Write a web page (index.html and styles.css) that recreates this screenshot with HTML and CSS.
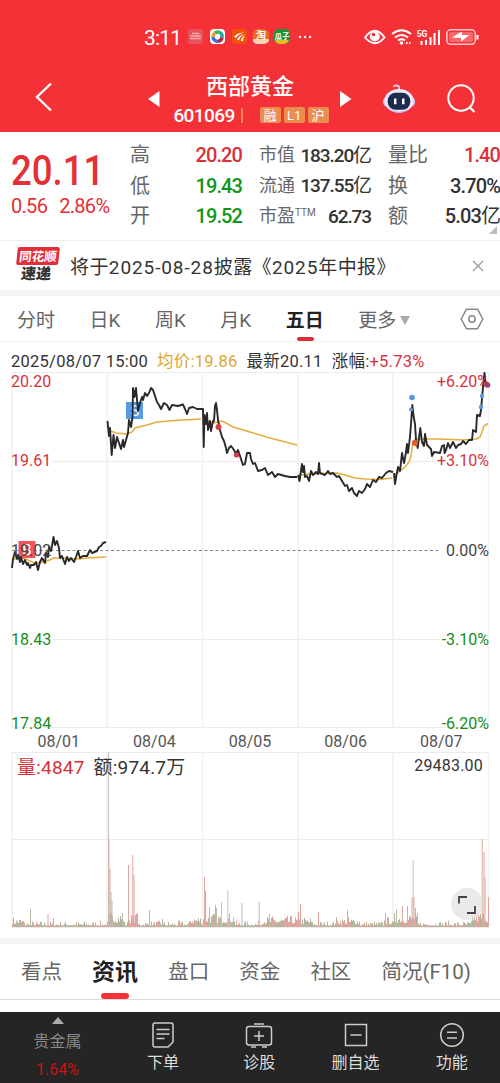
FILE: index.html
```
<!DOCTYPE html>
<html lang="zh-CN">
<head>
  <meta charset="UTF-8">
  <meta name="viewport" content="width=device-width, initial-scale=1.0">
  <title>西部黄金 601069</title>
  <link rel="stylesheet" href="styles.css">
</head>
<body>
  <header class="header">
    <div class="status">
      <span class="clock">3:11</span>
      <svg class="apps" width="126" height="18" viewBox="0 0 126 18">
        <rect x="0" y="1" width="15" height="15" rx="3" fill="#e9525a"/>
        <path d="M2 8h11M4 5.500h7M2 10.500h11" stroke="#fba8aa" stroke-width="1.500"/>
        <rect x="22" y="1" width="15" height="15" rx="4" fill="#fff"/>
        <g fill="none" stroke-width="3.500">
          <path d="M25 9a5 5 0 0 1 2-4" stroke="#f0a02c"/>
          <path d="M27 5a5 5 0 0 1 5-.6" stroke="#38b757"/>
          <path d="M32 4.400a5 5 0 0 1 2 5" stroke="#22a4a9"/>
          <path d="M34 9.400a5 5 0 0 1-4 4" stroke="#b52845"/>
          <path d="M30 13.400a5 5 0 0 1-5-4.400" stroke="#3475df"/>
        </g>
        <rect x="44" y="1" width="15" height="15" rx="3" fill="#f45108"/>
        <path d="M46 8.500q4-4 10-4q-6 1.500-8 5.500zM49 11.500q2-4 8-6q-5 3-6 7zM53 13q0-4 4-5.500q-2 2-2 5.500z" fill="#fff"/>
        <rect x="65" y="1" width="16" height="15" rx="5" fill="#ef6a1d"/>
        <path d="M65 11h16v2q-2 3-5 3h-6q-4 0-5-3z" fill="#f8d5b8"/>
        <text x="73" y="11" font-size="10" font-weight="700" text-anchor="middle" fill="#fff">淘</text>
        <rect x="86" y="1" width="16" height="15" rx="5" fill="#19963b"/>
        <path d="M87 12h14q-2 4-5 4h-4q-4 0-5-4z" fill="#e8bd22"/>
        <text x="94" y="10.500" font-size="7.500" font-weight="700" text-anchor="middle" fill="#fff">瓜子</text>
        <g fill="#fff"><circle cx="112" cy="9" r="1.200"/><circle cx="117" cy="9" r="1.200"/><circle cx="122" cy="9" r="1.200"/></g>
      </svg>
      <svg class="system" width="116" height="18" viewBox="0 0 116 18">
        <path d="M1 9.500Q11-4 20.500 9.500Q11 21 1 9.500z" fill="none" stroke="#fff" stroke-width="1.800"/>
        <circle cx="10.800" cy="8.500" r="5" fill="#fff"/>
        <circle cx="9.500" cy="6.500" r="1.800" fill="#f53238"/>
        <g fill="none" stroke="#fff" stroke-width="2">
          <path d="M28 6q9.500-7.500 19 0M31 9.500q6.500-5 13 0M34 12.500q3.500-2.500 7 0"/>
        </g>
        <circle cx="37.500" cy="15" r="1.800" fill="#fff"/>
        <path d="M42 15h1.500M45 15h1.500" stroke="#fff" stroke-width="2"/>
        <text class="net" x="58" y="8.500" fill="#fff">5G</text>
        <path d="M57.500 13v4M62 12v5M66.500 9v8M70.500 5v12M75 2v15" stroke="#fff" stroke-width="2"/>
        <rect x="82.800" y="1.800" width="28.500" height="14.500" rx="4" fill="none" stroke="#ffc9ca" stroke-width="1.600"/>
        <rect x="85" y="4" width="24" height="10" rx="2" fill="#f8696d"/>
        <path d="M88 9.500l10-6v3.500h7.500l-8.500 6.500v-3.500z" fill="#fff"/>
        <path d="M113.500 7v4.500" stroke="#fff" stroke-width="2"/>
      </svg>
    </div>
    <div class="nav">
      <svg class="back" width="20" height="30" viewBox="0 0 20 30"><path d="M17 1.500L3 15l14 13.500" fill="none" stroke="#fff" stroke-width="2.400"/></svg>
      <svg class="prev" width="12" height="16" viewBox="0 0 12 16"><path d="M11.500 0v16L0 8z" fill="#fff"/></svg>
      <div class="stock">
        <h1>西部黄金</h1>
        <div class="code"><span>601069</span><i></i><b>融</b><b>L1</b><b>沪</b></div>
      </div>
      <svg class="next" width="12" height="16" viewBox="0 0 12 16"><path d="M0 0v16l11.500-8z" fill="#fff"/></svg>
      <svg class="robot" width="34" height="31" viewBox="0 0 36 32">
        <path d="M12 3.500q3-3 6 0v3" fill="none" stroke="#e8def5" stroke-width="1.800"/>
        <rect x="1" y="14" width="34" height="11" rx="5" fill="#c9c4ef"/>
        <ellipse cx="18" cy="18.500" rx="15.500" ry="12.500" fill="#efe7fa"/>
        <path d="M7 26q11 8 22 0q-4 5-11 5t-11-5z" fill="#bfaef0"/>
        <rect x="6" y="10" width="24" height="18" rx="8.500" fill="#1d2b4d"/>
        <path d="M14 16v6M22.500 16v6" stroke="#fff" stroke-width="2.600"/>
      </svg>
      <svg class="search" width="30" height="30" viewBox="0 0 30 30"><circle cx="14" cy="14" r="12.700" fill="none" stroke="#fff" stroke-width="2"/><path d="M22.500 23l5 5" stroke="#fff" stroke-width="2.200"/></svg>
    </div>
  </header>

  <section class="quote">
    <div class="price">
      <strong>20.11</strong>
      <p><span>0.56</span><span>2.86%</span></p>
    </div>
    <dl>
      <dt>高</dt><dd class="up">20.20</dd>
      <dt>低</dt><dd class="down">19.43</dd>
      <dt>开</dt><dd class="down">19.52</dd>
    </dl>
    <dl class="small">
      <dt>市值</dt><dd>183.20<em>亿</em></dd>
      <dt>流通</dt><dd>137.55<em>亿</em></dd>
      <dt>市盈<sup>TTM</sup></dt><dd>62.73</dd>
    </dl>
    <dl class="last">
      <dt>量比</dt><dd class="up">1.40</dd>
      <dt>换</dt><dd>3.70%</dd>
      <dt>额</dt><dd>5.03<em>亿</em></dd>
    </dl>
  </section>

  <section class="news">
    <div class="logo"><b>同花顺</b><span>速递</span></div>
    <p>将于<span>2025-08-28</span>披露《<span>2025</span>年中报》</p>
    <svg width="12" height="12" viewBox="0 0 12 12"><path d="M1 1l10 10M11 1L1 11" stroke="#999" stroke-width="1.300"/></svg>
  </section>

  <nav class="periods">
    <span>分时</span>
    <span>日K</span>
    <span>周K</span>
    <span>月K</span>
    <span class="active">五日</span>
    <span class="more">更多<i></i></span>
    <svg width="24" height="22" viewBox="0 0 24 22"><path d="M6.500 1.200h11L22.800 11l-5.300 9.800h-11L1.200 11z" fill="none" stroke="#888" stroke-width="1.500" stroke-linejoin="round"/><circle cx="12" cy="11" r="3.200" fill="none" stroke="#888" stroke-width="1.500"/></svg>
  </nav>

  <div class="info">
    <span>2025/08/07 15:00</span>
    <span class="avg">均价:19.86</span>
    <span>最新20.11</span>
    <span>涨幅:<b>+5.73%</b></span>
  </div>

  <svg class="chart" width="500" height="356" viewBox="0 372 500 356">
    <path class="grid" d="M12 372.500H489M52 461.500H440M52 639.500H440M12 727.500H489"/>
    <path class="grid bold" d="M12 372V728M107 372V728M202.500 372V728M298 372V728M393 372V728M488.500 372V728"/>
    <path d="M12 550.500H440" stroke="#888" stroke-dasharray="3 2.500"/>

    <g class="average">
      <path d="M12 560L20 557L28 560L34 563L45 562L54 558L65 558L78 559L88 558L106 557"/>
      <path d="M108 430L116 433L127 434L132 432L135 428L147 425L157 422L175 420.500L201 419"/>
      <path d="M203 416L208 421L214 423L222 421L226 423L233 427L250 432L270 438L297 445"/>
      <path d="M299 475L312 474L337 473L345 475L355 478L365 479L380 479.500L392 478"/>
      <path d="M395 475L401 470L405 467L409 462L411 456L413 441L417 439L440 439L463 440L476 439L480 437L482 432L484 426L488 423.500"/>
    </g>
    <rect x="18.500" y="541" width="17" height="17" fill="#f0555f"/>
    <text x="27" y="555" class="mark">B</text>
    <rect x="126" y="402" width="17" height="17" fill="#579be4"/>
    <text x="135" y="416" class="mark">S</text>
    <g class="line">
      <path d="M12 568L13 559L15 552L17 559L18 555L20 562L21 557L23 564L25 560L27 565L28 563L30 568L31 565L34 565L36 562L38 570L40 562L42 558L45 563L46 553L48 557L49 547L51 551L52 546L53.500 537L55 545L57 541L59 548L60 558L62 556L65 564L67 557L69 561L71 558L74 562L76 557L78 551L80 558L83 556L87 556L90 550L92 553L97 551L99 547L101 546L103 543L106 542"/>
      <path d="M107.500 421L109 436L110 428L111.700 455L113.500 435L115 448L117 437L119 443L121 449L123 440L124 447L126 440L128 433L129 420L131 427L132.500 417L133 388L134.500 397L136 388L138 411L140 403L142 397L143 400L145 393L147 396L149 393L151 388L153 390L155 396L157 402L159 405L161 409L164 403L167 405L169.500 410L172 405L178 406L183 404.500L185 409L187 414L189 408L193 407L197 409L203 409L203.700 447L204.500 415L206 424L207 413L208 430L210 421L211 431L213 421L214 421L215 406L216 403L217 410L218 420L220 430L222 437L224 441L226 448L227 453L229 448L231 446L234 450L236 454L238 450L240 456L243 465L245 464L247 453L250 453L251 459L253 464L255 463L258 471L262 470L265 468L268 475L272 472L275 477L278 474L285 476L290 477L297 477"/>
      <path d="M298 475L299.500 481L302 464L303 472L304 466L305 477L307 476L309 481L311 471L313 475L316 472L318 474L319 463L320 473L325 475L328 471L330 474L333 473L337 477L339 476L342 481L345 486L347 485L349 491L352 488L354 493L357 496L359 491L362 493L365 489L367 484L370 487L373 480L376 482L379 477L382 478L386 473L389 471L393 472"/>
      <path d="M394 473L395 484L396.500 475L398 467L400 471L402 453L404 463L405 458L406 452L407 444L408 453L410 437L411.300 420L412.300 405L413.700 417L415 424L416 440L417.700 448L419 438L420.300 428L422 442L424 446L425 434L427 445L429 447L431 449L432 456L434 452L440 453L442 446L444 445L444.500 453L446 450L448 443L450 448L453 442L456 448L458 445L461 444L463 441L466 444L469 440L472 440L473 430L476 432L477 415L480 416L481 410L483 387L484.500 373L485.500 382L487 385"/>
    </g>
    <g fill="#d83f45"><circle cx="218.500" cy="427" r="3"/><circle cx="236.500" cy="455" r="2.600"/></g>
    <circle cx="415" cy="443" r="3" fill="#e65a2d"/>
    <g fill="#5b98dc"><circle cx="412" cy="397.500" r="2.800"/><circle cx="411" cy="409.500" r="2"/><circle cx="482" cy="396" r="2.200"/><circle cx="481" cy="407" r="2.200"/></g>
    <circle cx="487.500" cy="385" r="2.800" fill="#804580"/>

    <g class="axis">
      <text class="up" x="11" y="386.500">20.20</text>
      <text class="up" x="11" y="466">19.61</text>
      <text x="11" y="555.500">19.02</text>
      <text class="down" x="11" y="645">18.43</text>
      <text class="down" x="11" y="729">17.84</text>
    </g>
    <g class="axis right">
      <text class="up" x="489" y="386.500">+6.20%</text>
      <text class="up" x="489" y="466">+3.10%</text>
      <text x="489" y="555.500">0.00%</text>
      <text class="down" x="489" y="645">-3.10%</text>
      <text class="down" x="489" y="729">-6.20%</text>
    </g>
  </svg>

  <div class="dates"><span>08/01</span><span>08/04</span><span>08/05</span><span>08/06</span><span>08/07</span></div>

  <div class="volume">
    <svg width="500" height="176" viewBox="0 752 500 176">
      <path class="grid" d="M12 752.500H489M12 839.500H489M12 927.500H489"/>
      <path class="grid bold" d="M12 752V927M107 752V927M202.500 752V927M298 752V927M393 752V927M488.500 752V927"/>
      <g id="bars"></g>
    </svg>
    <div class="legend"><span class="up">量:4847</span><span>额:974.7万</span><span class="max">29483.00</span></div>
    <div class="expand"><svg width="18" height="18" viewBox="0 0 18 18"><path d="M1 7.500V1h8M17 10v7H9" fill="none" stroke="#444" stroke-width="1.800"/></svg></div>
  </div>

  <nav class="tabs">
    <span>看点</span>
    <span class="active">资讯</span>
    <span>盘口</span>
    <span>资金</span>
    <span>社区</span>
    <span>简况(F10)</span>
  </nav>

  <footer class="toolbar">
    <div class="index"><i></i><span>贵金属</span><b>1.64%</b></div>
    <div>
      <svg width="24" height="26" viewBox="0 0 24 26"><path d="M4 1h16q2 0 2 2v17l-5 5H4q-2 0-2-2V3q0-2 2-2zM5.500 7.500h13M5.500 12h13M5.500 16.500h8"/></svg>
      <span>下单</span>
    </div>
    <div>
      <svg width="28" height="26" viewBox="0 0 28 26"><rect x="1.500" y="4.500" width="25" height="18.500" rx="2.500"/><path d="M9 2h10M6 25h5M17 25h5M14 9v10M9 14h10"/></svg>
      <span>诊股</span>
    </div>
    <div>
      <svg width="24" height="26" viewBox="0 0 24 26"><path d="M1.500 2.500h21v21h-21zM6.500 13h11"/></svg>
      <span>删自选</span>
    </div>
    <div>
      <svg width="26" height="26" viewBox="0 0 26 26"><circle cx="13" cy="13" r="11.300"/><path d="M8 10.300h10M8 16h10"/></svg>
      <span>功能</span>
    </div>
  </footer>

  <script src="chart.js"></script>
</body>
</html>
```
FILE: styles.css
```
* { box-sizing: border-box; }

body {
  margin: 0;
  width: 500px;
  background: #fff;
  color: #333;
  font-family: Roboto, "Noto Sans CJK SC", sans-serif;
  font-size: 17px;
  line-height: 1;
}
svg { display: block; flex-shrink: 0; }
h1, p, dl, dd { margin: 0; }
em, i { font-style: normal; }
.up { color: #d7323a; fill: #d7323a; }
.down { color: #109618; fill: #168c1c; }

/* Header */
.header {
  height: 132px;
  background: #f33137;
  color: #fff;
  padding-top: 27px;
}
.status {
  display: flex;
  align-items: center;
  height: 20px;
  padding-left: 144px;
}
.clock {
  width: 44px;
  padding-top: 2px;
  font-size: 21px;
  letter-spacing: -0.8px;
}
.system { margin-left: 50px; }
.net {
  font-size: 8.5px;
  font-weight: 700;
  text-anchor: middle;
}
.apps, .system { overflow: visible; }
.nav {
  display: flex;
  align-items: center;
  height: 85px;
  padding: 18px 23px 0 34px;
}
.back { margin-top: -4px; }
.prev { margin-left: 94px; }
.stock {
  width: 180px;
  text-align: center;
  padding-top: 3px;
}
.stock h1 {
  font-size: 22px;
  font-weight: 500;
  line-height: 26px;
}
.code {
  display: flex;
  align-items: center;
  justify-content: center;
  height: 22px;
  margin: 4px 0 0 5px;
}
.code span {
  padding-top: 1px;
  font-size: 19px;
  font-weight: 500;
  letter-spacing: -0.6px;
}
.code i {
  width: 2px;
  height: 15px;
  margin: 0 17px 0 6px;
  background: #f08a50;
}
.code b {
  width: 21px;
  height: 16px;
  margin-right: 3px;
  border-radius: 2px;
  background: #ea8d4f;
  font-size: 13px;
  font-weight: 400;
  line-height: 17px;
}
.robot { margin-left: 30px; }
.search { margin-left: auto; }

/* Quote */
.quote {
  display: flex;
  position: relative;
  height: 109px;
  padding-top: 8px;
  border-bottom: 1px solid #f0f0f0;
}
.quote::after {
  content: "";
  position: absolute;
  right: 3px;
  bottom: 6px;
  border-left: 8px solid transparent;
  border-bottom: 8px solid #bbb;
}
.price {
  width: 130px;
  padding: 10px 0 0 11px;
  color: #e42f35;
}
.price strong {
  display: block;
  font-size: 42px;
  font-weight: 500;
  line-height: 42px;
  transform: scaleX(.87);
  transform-origin: left;
}
.price p {
  display: flex;
  gap: 12px;
  margin-top: 4px;
  font-size: 20px;
  letter-spacing: -0.7px;
}
.quote dl {
  display: grid;
  grid-template-columns: 40px 72px;
  grid-auto-rows: 30.5px;
  align-items: center;
  width: 112px;
  margin-right: 17px;
}
.quote dl.last { margin-right: 0; }
.quote dt {
  color: #666;
  font-size: 20px;
  white-space: nowrap;
}
.quote .small dt { font-size: 18px; }
.quote dt sup {
  font-size: 10px;
  line-height: 0;
  vertical-align: 6px;
}
.quote dd {
  font-size: 20px;
  font-weight: 500;
  letter-spacing: -0.9px;
  text-align: right;
  white-space: nowrap;
}
.quote .small dd {
  font-size: 19px;
  letter-spacing: -1.1px;
}
.quote em { font-weight: 400; }

/* News */
.news {
  display: flex;
  align-items: center;
  height: 55px;
  padding: 0 16px;
  border-bottom: 6px solid #f3f3f3;
}
.logo {
  width: 42px;
  text-align: center;
  transform: skewX(-6deg);
}
.logo b {
  display: block;
  height: 18px;
  border-radius: 2px;
  background: #e22e37;
  color: #fff;
  font-size: 12.5px;
  line-height: 19px;
}
.logo span {
  display: block;
  font-size: 15px;
  font-weight: 900;
  line-height: 19px;
}
.news p {
  flex: 1;
  margin-left: 12px;
  padding-top: 3px;
  font-size: 19px;
  letter-spacing: 0.4px;
  white-space: nowrap;
}
.news p span { letter-spacing: 0.9px; }

/* Chart periods */
.periods {
  display: flex;
  align-items: center;
  height: 46px;
  padding: 0 16px 0 17px;
  border-bottom: 1px solid #eee;
  color: #666;
  font-size: 19px;
}
.periods span {
  margin-right: 34.5px;
  padding-top: 3px;
}
.periods .active {
  position: relative;
  color: #222;
  font-weight: 700;
}
.periods .active::after {
  content: "";
  position: absolute;
  left: 11px;
  bottom: -11px;
  width: 17px;
  height: 4px;
  border-radius: 2px;
  background: #d7323a;
}
.periods .more {
  display: flex;
  align-items: center;
  gap: 4px;
  margin-right: 0;
}
.periods .more i {
  border: 5.5px solid transparent;
  border-top: 9px solid #aaa;
  border-bottom: 0;
}
.periods svg { margin-left: auto; }

.info {
  display: flex;
  align-items: center;
  height: 30px;
  padding: 10px 0 0 11px;
  font-size: 16.5px;
  letter-spacing: 0.25px;
  white-space: nowrap;
}
.info span { margin-right: 9px; }
.info .avg { color: #e0a52e; }
.info b {
  color: #d7323a;
  font-weight: 400;
}

/* Charts */
.chart { overflow: visible; }
.grid {
  fill: none;
  stroke: #ececec;
}
.grid.bold {
  stroke: #f1f1f1;
  stroke-width: 1.5;
}
.average {
  fill: none;
  stroke: #e5ac3b;
  stroke-width: 1.5;
}
.line {
  fill: none;
  stroke: #292929;
  stroke-width: 1.9;
  stroke-linejoin: round;
}
.mark {
  fill: #fff;
  font-size: 15px;
  text-anchor: middle;
}
.axis { font-size: 16px; }
.axis text:not([class]) { fill: #444; }
.axis.right { text-anchor: end; }
.dates {
  display: grid;
  grid-template-columns: repeat(5, 1fr);
  align-items: center;
  height: 24px;
  padding: 3px 11px 0;
  color: #555;
  font-size: 16px;
  text-align: center;
}
.volume {
  position: relative;
  height: 192px;
  border-bottom: 6px solid #f3f3f3;
}
.legend {
  position: absolute;
  top: 6px;
  left: 17px;
  right: 17px;
  display: flex;
  gap: 9px;
  font-size: 19px;
  letter-spacing: 0.2px;
}
.legend .max {
  margin-left: auto;
  font-size: 16px;
}
.expand {
  position: absolute;
  left: 451px;
  top: 136px;
  width: 32px;
  height: 32px;
  padding: 8px 7px;
  border-radius: 50%;
  background: rgba(225, 225, 225, .7);
}

/* Content tabs */
.tabs {
  display: flex;
  justify-content: space-between;
  align-items: center;
  height: 56px;
  margin-bottom: 12px;
  padding: 2px 29px 0 21px;
  border-bottom: 1px solid #ddd;
  color: #666;
  font-size: 20.5px;
}
.tabs .active {
  position: relative;
  color: #222;
  font-size: 23px;
  font-weight: 700;
}
.tabs .active::after {
  content: "";
  position: absolute;
  left: 9px;
  bottom: -15px;
  width: 28px;
  height: 6px;
  border-radius: 3px;
  background: #f33137;
}

/* Bottom toolbar */
.toolbar {
  display: grid;
  grid-template-columns: 115px repeat(4, 96.25px);
  height: 71px;
  background: #252525;
  color: #ddd;
  font-size: 16px;
}
.toolbar div {
  display: flex;
  flex-direction: column;
  align-items: center;
  gap: 7px;
  padding-top: 10px;
}
.toolbar svg {
  fill: none;
  stroke: #ccc;
  stroke-width: 1.5;
}
.toolbar .index {
  gap: 0;
  padding-top: 5px;
  color: #888;
}
.index i {
  border: 6px solid transparent;
  border-top: 0;
  border-bottom: 7px solid #aaa;
}
.index span { margin-top: 10px; }
.index b {
  margin-top: 12px;
  color: #c81414;
  font-weight: 400;
}
```
FILE: chart.js
```
// [x, height, color]
const spikes = [
  [30, 18, 'g'], [47.5, 13, 'r'], [53, 9, 'r'], [108, 175, 'n'], [108.5, 88, 'r'], [109.5, 58, 'r'],
  [110.5, 35, 'g'], [111.5, 26, 'g'], [122, 14, 'g'], [128, 62, 'r'], [132.3, 72, 'r'], [133.5, 52, 'r'],
  [136, 14, 'r'], [149, 17, 'r'], [162, 8, 'g'], [204, 50, 'r'], [205, 36, 'r'], [209, 20, 'g'],
  [215, 22, 'r'], [216, 19, 'g'], [221, 25, 'n'], [227.3, 37, 'n'], [241.5, 24, 'g'], [258.7, 25, 'g'],
  [269, 13, 'g'], [298, 15, 'r'], [300, 23, 'r'], [318, 15, 'r'], [347, 17, 'g'], [385, 14, 'r'],
  [396, 18, 'g'], [402, 21, 'r'], [407, 21, 'r'], [411.5, 30, 'r'], [412.7, 67, 'n'], [413.5, 30, 'r'],
  [415, 19, 'g'], [481.7, 88, 'r'], [483.5, 75, 'r'], [484.5, 50, 'r'], [488, 30, 'r']
];
const colors = { r: '#e4a59f', g: '#b4bfa8', n: '#c4c4c4' };
const bars = document.getElementById('bars');

function bar(x, height, color) {
  const rect = document.createElementNS('http://www.w3.org/2000/svg', 'rect');
  rect.setAttribute('x', x);
  rect.setAttribute('y', 927 - height);
  rect.setAttribute('width', 1);
  rect.setAttribute('height', height);
  rect.setAttribute('fill', color);
  bars.appendChild(rect);
}

// busy stretches: start, end, extra height
const busy = [[12, 24, 4], [108, 124, 9], [128, 138, 7], [190, 202, 6], [203, 235, 8], [262, 298, 5], [298, 312, 4], [335, 360, 4], [384, 392, 4], [394, 418, 8], [472, 489, 10]];

let seed = 7;
for (let x = 12; x < 488; x++) {
  seed = (seed * 16807) % 2147483647;
  const n = seed / 2147483647;
  const zone = busy.find(b => x >= b[0] && x < b[1]);
  bar(x, 1.5 + n * n * n * 5 + (zone ? (0.3 + n * 0.7) * zone[2] : 0), seed % 5 < 2 ? '#dba8a0' : '#b3b59c');
}
spikes.forEach(s => bar(s[0], s[1], colors[s[2]]));
```
